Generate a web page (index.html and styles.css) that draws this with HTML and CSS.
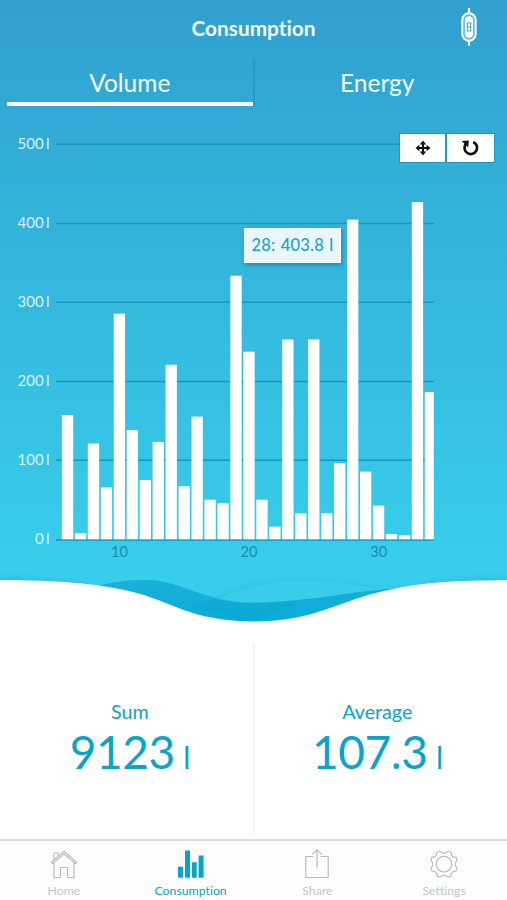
FILE: index.html
```html
<!DOCTYPE html>
<html lang="en">
  <head>
    <meta charset="UTF-8" />
    <meta name="viewport" content="width=device-width, initial-scale=1.0" />
    <title>Consumption</title>
    <link rel="stylesheet" href="styles.css">
  </head>
  <body>
    <div class="app">
      <section class="hero">
        <header class="topbar">
          <h1>Consumption</h1>
          <svg class="device" width="18" height="38" viewBox="0 0 18 38">
            <path d="M9 0v6M9 32v6" stroke="#fff" stroke-width="2.2" />
            <rect x="2.3" y="5.3" width="13.4" height="27.4" rx="6.7" fill="#5cb8dc" stroke="#fff" stroke-width="2" />
            <rect x="4.9" y="8.2" width="8.2" height="21.6" rx="4.1" fill="#fff" />
            <path d="M6.4 15h5.2M6.4 19h5.2M6.4 23h5.2M7.5 15v8M10.5 15v8" stroke="#4ba9cf" stroke-width="1" />
          </svg>
        </header>

        <div class="tabs">
          <a class="tab active">Volume</a>
          <a class="tab">Energy</a>
        </div>

        <div class="chart">
          <svg class="plot" width="507" height="456" viewBox="0 114 507 456">
            <g class="grid">
              <path d="M56 144.3H434M56 223.6H434M56 302.3H434M56 381.4H434M56 460.2H434M56 540H434" />
            </g>
            <g class="y-labels">
              <text x="49.5" y="149">500 l</text>
              <text x="49.5" y="228.2">400 l</text>
              <text x="49.5" y="306.7">300 l</text>
              <text x="49.5" y="386">200 l</text>
              <text x="49.5" y="464.7">100 l</text>
              <text x="49.5" y="544">0 l</text>
            </g>
            <g class="bars" id="bars"></g>
            <g class="x-labels">
              <text x="119.5" y="557.3">10</text>
              <text x="249" y="557.3">20</text>
              <text x="378.7" y="557.3">30</text>
            </g>
          </svg>
          <div class="tools">
            <button class="tool">
              <svg width="16" height="16" viewBox="0 0 16 16">
                <path d="M8 2.5v11M2.5 8h11" stroke="#111" stroke-width="2.1" />
                <path d="M8 .5l3.2 3.9H4.8zM8 15.5l3.2-3.9H4.8zM.5 8l3.9-3.2v6.4zM15.5 8l-3.9-3.2v6.4z" fill="#111" />
              </svg>
            </button>
            <button class="tool">
              <svg width="19" height="18" viewBox="0 0 19 18">
                <path d="M12.2 2.9A6.3 6.3 0 1 1 4.7 5" fill="none" stroke="#111" stroke-width="2.7" />
                <path d="M.8 2.1L7.9 1.6 7.2 8.5z" fill="#111" />
              </svg>
            </button>
          </div>
          <div class="tooltip">28: 403.8 l</div>
        </div>

        <svg class="wave" width="507" height="60" viewBox="0 570 507 60">
          <defs>
            <linearGradient id="deep" x1="0" y1="0" x2="0" y2="1">
              <stop offset="0" stop-color="#19b0d9" />
              <stop offset="1" stop-color="#09acda" />
            </linearGradient>
            <filter id="soft" x="-10%" y="-40%" width="120%" height="180%">
              <feGaussianBlur stdDeviation="4" />
            </filter>
          </defs>
          <path d="M0 580C110 580 150 621 254 621S390 580 507 580V630H0Z" fill="#1590b4" opacity=".45" filter="url(#soft)" />
          <path d="M190 607C222 597 248 580 290 579C330 577 358 585 390 591L300 618Z" fill="#2fbcd9" opacity=".5" filter="url(#soft)" />
          <path d="M195 607C225 597 250 582 295 581C330 580 355 585 386 591L300 618Z" fill="#39cdea" />
          <path d="M98 586C115 581 132 580 148 580C180 580 205 603 254 602.7C310 602 350 591 400 588L340 612L254 624L180 612Z" fill="url(#deep)" />
          <path d="M190 608C206 603 216 598 226 593L222 602C240 603 275 603 310 598L254 622Z" fill="#0793bd" opacity=".13" />
          <path d="M0 580C55 580.3 95 583 130 591.3C172 601 190 621.5 254 621.5C315 621.5 340 600 386 590.5C425 582 455 580.5 507 580.3V630H0Z" fill="#fff" />
        </svg>
      </section>

      <section class="stats">
        <div class="stat">
          <span class="label">Sum</span>
          <span class="value">9123 <small>l</small></span>
        </div>
        <div class="stat">
          <span class="label">Average</span>
          <span class="value">107.3 <small>l</small></span>
        </div>
      </section>

      <nav class="bottom-nav">
        <a class="nav-item">
          <svg width="28" height="30" viewBox="0 0 28 30">
            <path d="M1.5 13.3L14 2.2l12.5 11.1-1.3 1.4L14 4.9 2.8 14.7zM4 13.7v14.8h6.5v-10h7v10H24V13.7M4 11V4h4v3.4" />
          </svg>
          <span>Home</span>
        </a>
        <a class="nav-item active">
          <svg width="28" height="30" viewBox="0 0 28 30">
            <path d="M1 17.8h5v11H1zM8 1.5h5v27.3H8zM15 13.2h4.7v15.6H15zM21.6 6.4h5v22.4h-5z" />
          </svg>
          <span>Consumption</span>
        </a>
        <a class="nav-item">
          <svg width="28" height="30" viewBox="0 0 28 30">
            <path d="M10.5 7.5H2.8v21h22.4v-21h-7.7M14 18.5V.9M9 5.6L14 .8l5 4.8" />
          </svg>
          <span>Share</span>
        </a>
        <a class="nav-item">
          <svg width="28" height="30" viewBox="0 0 28 30">
            <path d="M9.8 2.2Q14 6.5 18.2 2.2L21.1 3.4Q21.2 8.3 26.2 8.4L27.2 11.4Q22.8 15 27.2 19.2L25.9 22.2Q20.9 22.2 20.8 27L17.9 28.2Q14 24.1 10.1 28.2L7.2 27Q7.1 22.2 2.1 22.2L.8 19.2Q5.2 15 .8 11.4L1.8 8.4Q6.8 8.3 6.9 3.4Z" />
            <circle cx="14" cy="15.2" r="7.8" />
          </svg>
          <span>Settings</span>
        </a>
      </nav>
    </div>

    <script src="chart.js"></script>
  </body>
</html>
```
FILE: styles.css
```css
* {
  box-sizing: border-box;
}
body {
  margin: 0;
  font-family: Lato, sans-serif;
  font-variant-ligatures: none;
  background-color: #fff;
}
.app {
  width: 507px;
  height: 900px;
  display: flex;
  flex-direction: column;
  overflow: hidden;
}
.hero {
  display: flex;
  flex-direction: column;
  height: 630px;
  background: linear-gradient(#319fce 0, #32aed7 160px, #38cdeb 565px);
}
.topbar {
  display: grid;
  grid-template-columns: 1fr auto 1fr;
  align-items: center;
  height: 55px;
  padding: 0 29px 1px;
  color: #f2fcff;
}
h1 {
  grid-column: 2;
  margin: 0;
  font-size: 20.8px;
  font-weight: bold;
}
.device {
  justify-self: end;
}
.tabs {
  display: flex;
  height: 59px;
  padding: 3px 7px 8px;
}
.tab {
  flex: 1;
  height: 48px;
  line-height: 49px;
  text-align: center;
  font-size: 24.5px;
  color: #f2fcff;
}
.tab.active {
  border-right: 2px solid #2799c2;
  box-shadow: inset 0 -4px #fff;
}
.chart {
  position: relative;
  height: 456px;
}
.plot,
.wave {
  display: block;
}
.grid {
  fill: none;
  stroke: #1598bc;
  stroke-width: 1.5;
}
.bars {
  fill: #fff;
}
.y-labels {
  fill: #d5f6ff;
  font-size: 15px;
  word-spacing: -1.5px;
  text-anchor: end;
}
.x-labels {
  fill: #168dae;
  font-size: 14.5px;
  text-anchor: middle;
}
.tools {
  position: absolute;
  top: 19px;
  right: 12px;
  display: flex;
}
.tool {
  display: flex;
  align-items: center;
  justify-content: center;
  width: 47px;
  height: 30px;
  padding: 0;
  border: 1px solid #1d9ac0;
  background: #fff;
}
.tool:last-child {
  width: 49px;
}
.tooltip {
  position: absolute;
  left: 244px;
  top: 114px;
  width: 97px;
  height: 35px;
  line-height: 33px;
  border: 1px solid #fff;
  background: #e9f6fa;
  color: #1ba3c9;
  font-size: 16.5px;
  font-weight: 500;
  letter-spacing: 0.2px;
  word-spacing: 1px;
  text-align: center;
  white-space: nowrap;
  box-shadow: 1px 2px 4px rgba(0, 70, 100, 0.4);
}
.stats {
  display: flex;
  height: 209px;
  padding: 14px 7px 5px;
}
.stat {
  flex: 1;
  display: flex;
  flex-direction: column;
  align-items: center;
  padding-top: 56px;
  color: #08a4ca;
}
.stat:first-child {
  border-right: 2px solid #f2f2f2;
}
.label {
  font-size: 19.7px;
  line-height: 23px;
}
.value {
  font-size: 46px;
  line-height: 57px;
  letter-spacing: -0.4px;
  word-spacing: -3px;
}
.value small {
  font-size: 30px;
}
.bottom-nav {
  display: flex;
  height: 61px;
  border-top: 2px solid #dcdcdc;
  background: #fdfdfd;
}
.nav-item {
  flex: 1;
  display: flex;
  flex-direction: column;
  align-items: center;
  padding: 8px 0 0 1px;
  font-size: 12.3px;
  line-height: 16px;
  color: #c6c6c6;
}
.nav-item svg {
  margin-bottom: 4px;
  fill: none;
  stroke: #bcbcbc;
  stroke-width: 1.2;
}
.nav-item.active {
  color: #08a4ca;
}
.nav-item.active svg {
  fill: #08a4ca;
  stroke: none;
}
```
FILE: chart.js
```js
// litres per reading, starting at reading 6
const values = [
  157, 8, 121, 65.5, 285, 138, 75, 123, 220.5, 67, 155, 50, 45.5, 333, 237,
  50, 16, 252.5, 33, 252.5, 33, 96, 403.8, 85.5, 42.5, 6.5, 5, 426, 186
];

const bars = document.getElementById("bars");
const baseline = 539.3;
const right = 433.8;

values.forEach((value, i) => {
  const x = 61.9 + i * 12.96;
  const height = value * 0.7915;
  const bar = document.createElementNS("http://www.w3.org/2000/svg", "rect");
  bar.setAttribute("x", x);
  bar.setAttribute("y", baseline - height);
  bar.setAttribute("width", Math.min(11.3, right - x));
  bar.setAttribute("height", height);
  bars.appendChild(bar);
});
```
